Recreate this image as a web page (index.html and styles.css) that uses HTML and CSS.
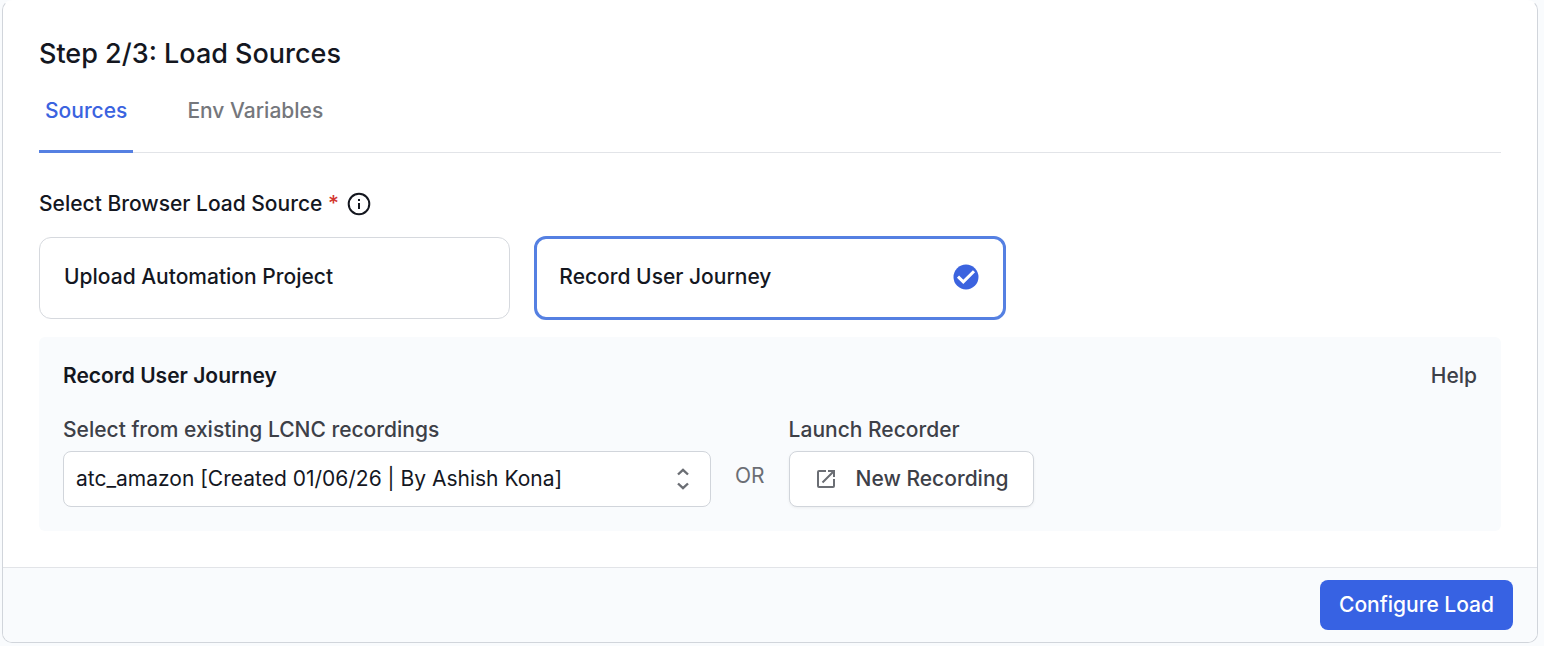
FILE: index.html
```html
<!DOCTYPE html>
<html lang="en">
<head>
<meta charset="utf-8">
<meta name="viewport" content="width=device-width, initial-scale=1">
<title>Load Sources</title>
<link rel="stylesheet" href="styles.css">
</head>
<body>
<form class="card">
  <div class="card-body">
    <h1 class="title">Step 2/3: Load Sources</h1>
    <div class="tabs" role="tablist">
      <button class="tab tab-active" type="button" role="tab" aria-selected="true">Sources</button>
      <button class="tab" type="button" role="tab" aria-selected="false">Env Variables</button>
    </div>

    <div class="source-heading">
      <span id="source-label">Select Browser Load Source <span class="required">*</span></span>
      <svg class="info-icon" viewBox="0 0 24 24" aria-hidden="true">
        <circle cx="12" cy="12" r="10.3"/>
        <path d="M12 11v6M12 7v2"/>
      </svg>
    </div>

    <div class="options" role="radiogroup" aria-labelledby="source-label">
      <label class="option">
        <input class="option-input" type="radio" name="source" value="upload">
        <span>Upload Automation Project</span>
      </label>
      <label class="option option-selected">
        <input class="option-input" type="radio" name="source" value="record" checked>
        <span>Record User Journey</span>
        <svg class="check-icon" viewBox="0 0 26 26" aria-hidden="true">
          <circle cx="13" cy="13" r="12.5"/>
          <path d="M5 12.6l5.3 5.3L21 7.2"/>
        </svg>
      </label>
    </div>

    <section class="panel">
      <div class="panel-header">
        <h2 class="panel-title">Record User Journey</h2>
        <a class="help" href="#help">Help</a>
      </div>
      <div class="panel-row">
        <div class="field field-select">
          <label class="field-label" for="recording">Select from existing LCNC recordings</label>
          <div class="select-wrap">
            <select class="select" id="recording">
              <option>atc_amazon [Created 01/06/26 | By Ashish Kona]</option>
            </select>
            <svg class="chevrons" viewBox="0 0 14 24" aria-hidden="true">
              <path d="M2 7.5l5-4.7 5 4.7M2 16.5l5 4.7 5-4.7"/>
            </svg>
          </div>
        </div>
        <span class="or">OR</span>
        <div class="field">
          <span class="field-label">Launch Recorder</span>
          <button class="button button-outline" type="button">
            <svg class="launch-icon" viewBox="0 0 20 20" aria-hidden="true">
              <path d="M10 2H3a1 1 0 0 0-1 1v14a1 1 0 0 0 1 1h14a1 1 0 0 0 1-1v-7M12 2h6v6M18 2L6.5 13.5"/>
            </svg>
            New Recording
          </button>
        </div>
      </div>
    </section>
  </div>
  <div class="card-footer">
    <button class="button button-primary" type="button">Configure Load</button>
  </div>
</form>
</body>
</html>
```
FILE: styles.css
```css
* {
  box-sizing: border-box;
}

body {
  margin: 0;
  padding: 0 6px 3px 2px;
  background: #f9fbfd;
  color: #14171f;
  font-family: Inter, sans-serif;
  font-size: 21px;
  line-height: 28px;
  font-weight: 500;
}

button,
select {
  font: inherit;
}

.card {
  background: #fff;
  border: 1px solid #d1d5db;
  border-top-color: transparent;
  border-radius: 10px;
  overflow: hidden;
}

.card-body {
  padding: 36px;
}

.title {
  margin: 0;
  font-size: 27px;
  line-height: 34px;
  font-weight: 500;
}

.tabs {
  display: flex;
  gap: 48px;
  margin-top: 26px;
  box-shadow: inset 0 -1px #e2e4e8;
}

.tab {
  padding: 0 6px 25px;
  border: 0;
  border-bottom: 3px solid transparent;
  background: none;
  color: #75777c;
}

.tab-active {
  border-bottom-color: #5580e2;
  color: #3b63df;
}

.source-heading {
  display: flex;
  align-items: center;
  gap: 8px;
  margin-top: 37px;
}

.required {
  color: #d3372f;
}

.info-icon {
  width: 24px;
  height: 24px;
  fill: none;
  stroke: #14171f;
  stroke-width: 2;
}

.options {
  display: grid;
  grid-template-columns: repeat(3, 1fr);
  align-items: center;
  gap: 24px;
  margin-top: 18px;
}

.option {
  position: relative;
  display: flex;
  align-items: center;
  justify-content: space-between;
  min-height: 82px;
  padding: 0 24px 2px;
  border: 1px solid #d6d9de;
  border-radius: 12px;
}

.option-selected {
  min-height: 84px;
  padding: 0 24px 2px 22px;
  border: 3px solid #5580e2;
}

.option-input {
  position: absolute;
  margin: 0;
  opacity: 0;
}

.check-icon {
  width: 26px;
  height: 26px;
  fill: #3b63df;
}

.check-icon path {
  fill: none;
  stroke: #fff;
  stroke-width: 3;
}

.panel {
  margin-top: 17px;
  padding: 25px 24px 24px;
  border-radius: 6px;
  background: #f9fbfd;
}

.panel-header {
  display: flex;
  justify-content: space-between;
}

.panel-title {
  margin: 0;
  font-size: 21px;
  font-weight: 600;
}

.help {
  color: #3d4048;
  text-decoration: none;
}

.panel-row {
  display: flex;
  align-items: flex-end;
  gap: 24px;
  margin-top: 26px;
}

.field {
  display: flex;
  flex-direction: column;
  gap: 7px;
}

.field-select {
  flex: 0 1 648px;
}

.field-label {
  color: #3d4048;
}

.select-wrap {
  position: relative;
}

.select {
  appearance: none;
  width: 100%;
  height: 56px;
  padding: 0 48px 0 12px;
  border: 1px solid #d1d5db;
  border-radius: 8px;
  background: #fff;
  color: #14171f;
  font-weight: 400;
}

.chevrons {
  position: absolute;
  top: 16px;
  right: 21px;
  width: 14px;
  height: 24px;
  fill: none;
  stroke: #6b6e74;
  stroke-width: 2.4;
  pointer-events: none;
}

.or {
  padding-bottom: 17px;
  color: #6b6e74;
  font-weight: 400;
}

.button {
  display: flex;
  align-items: center;
  border-radius: 8px;
}

.button-outline {
  gap: 20px;
  height: 56px;
  padding: 0 24px 0 26px;
  border: 1px solid #d1d5db;
  background: #fff;
  color: #3d4048;
  box-shadow: 0 1px 3px #0000000f;
}

.launch-icon {
  width: 20px;
  height: 20px;
  fill: none;
  stroke: #6b6e74;
  stroke-width: 2;
}

.card-footer {
  display: flex;
  justify-content: flex-end;
  padding: 12px 24px;
  border-top: 1px solid #e2e4e8;
  background: #f9fbfd;
}

.button-primary {
  height: 50px;
  padding: 0 19px;
  border: 0;
  background: #3762e3;
  color: #fff;
}
```
